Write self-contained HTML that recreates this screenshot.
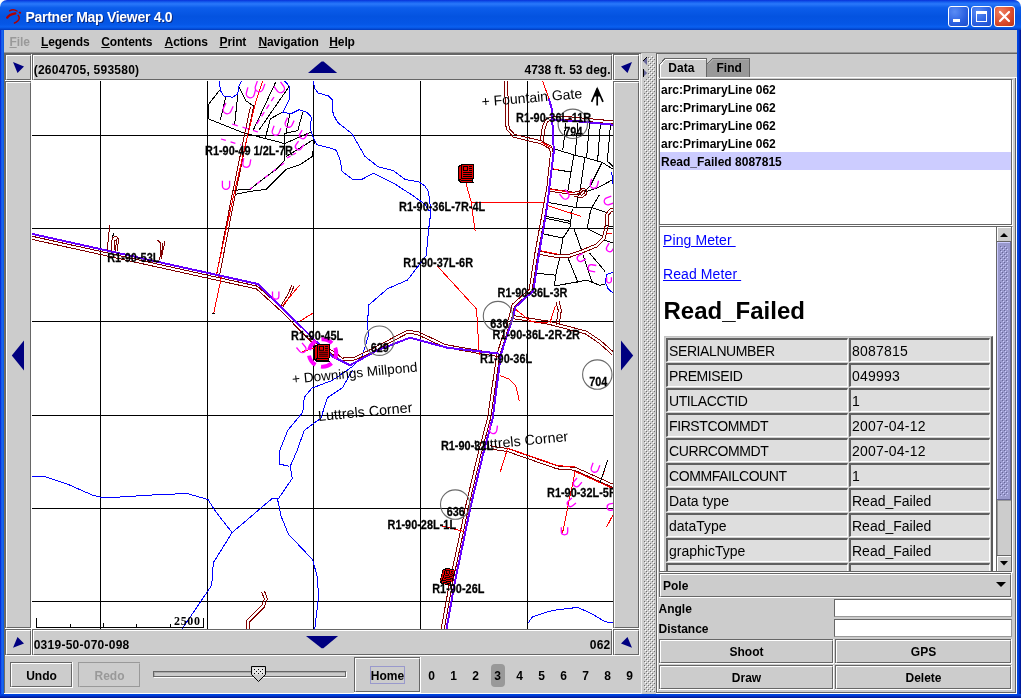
<!DOCTYPE html>
<html><head><meta charset="utf-8"><title>Partner Map Viewer 4.0</title>
<style>
*{box-sizing:border-box;margin:0;padding:0}
html,body{width:1021px;height:698px;overflow:hidden;background:#fff}
#bg{left:4px;top:30px;width:1013px;height:664px;background:#ccc}
body{will-change:transform;position:relative;font-family:"Liberation Sans",sans-serif;font-size:12px;font-weight:bold;color:#000}
.abs{position:absolute}
#title{left:0;top:0;width:1021px;height:30px;background:linear-gradient(#0831d9 0,#1660f0 7%,#2a78fa 13%,#0c5deb 26%,#0453e0 55%,#0556e6 80%,#0a60f0 90%,#0348d0 97%,#0238b8 100%);border-radius:7px 7px 0 0}
#title .t{left:25.5px;top:9px;color:#fff;font-size:14px;line-height:16px;letter-spacing:-.28px;text-shadow:1px 1px 0 #0a2a80;white-space:nowrap}
#bl{left:0;top:30px;width:4px;height:664px;background:linear-gradient(90deg,#0019cf,#1a66f0 45%,#1a66f0 60%,#0855dd)}
#br{left:1017px;top:30px;width:4px;height:668px;background:linear-gradient(90deg,#0046e6,#0040d8 35%,#0024b0 70%,#00138c)}
#bb{left:0;top:694px;width:1021px;height:4px;background:linear-gradient(#0046e6,#0040d8 35%,#0024b0 70%,#00138c)}
.wb{top:6px;width:21px;height:21px;border:1px solid #fff;border-radius:3px;background:radial-gradient(circle at 30% 25%,#5a8cf5,#2a5fe0 60%,#1d4cc8)}
.wb.c{background:radial-gradient(circle at 30% 25%,#f08060,#d9492a 60%,#b83414)}
#menu{left:4px;top:30px;width:1013px;height:22px;background:#ccc}
#menuline{left:4px;top:52px;width:1013px;height:1px;background:#999}
.mi{top:35px;white-space:nowrap;letter-spacing:-.12px}
.mi u{text-decoration:underline}
.btn{background:#ccc;border:1px solid #666;box-shadow:inset 1px 1px 0 #fff, 1px 1px 0 #fff}
.lbl{white-space:nowrap}
#map{left:32px;top:81px;width:581px;height:548px;background:#fff;overflow:hidden}

.b{position:absolute;background:#ccc;border:1px solid #666;border-right:none;border-bottom:none}
.b:before{content:"";position:absolute;left:0;top:0;right:0;bottom:0;border:1px solid #fff;border-right:1px solid #666;border-bottom:1px solid #666}
.b:after{content:"";position:absolute;left:-1px;top:-1px;right:-1px;bottom:-1px;border-right:1px solid #fff;border-bottom:1px solid #fff}
.bt{position:absolute;left:0;right:0;text-align:center;white-space:nowrap;z-index:2}
.dis{border-color:#999}.dis:before{border-color:#ccc #999 #999 #ccc}.dis:after{border-color:#ccc}
.tx{position:absolute;white-space:nowrap}.dg{letter-spacing:.25px}

.n{font-weight:normal}
#htm{font-family:"Liberation Sans",sans-serif;font-weight:normal;font-size:13px}
#htm a{color:#0000ff;text-decoration:underline;font-size:14px;letter-spacing:.1px}
table.t{position:absolute;left:4px;top:109px;border-collapse:separate;border-spacing:1px;background:#d0d0d0;border:1px solid #c2c2c2;border-right:2px solid #5a5a5a;border-bottom:2px solid #5a5a5a;table-layout:fixed;width:329px}
table.t td{height:24px;padding:0 0 0 1px;background:#dedede;border:1px solid #fff;border-top:2px solid #606060;border-left:2px solid #606060;font-size:14px;white-space:nowrap;vertical-align:middle;line-height:16px;overflow:hidden}
td.u{letter-spacing:-.4px}td.d{letter-spacing:.2px}
</style></head><body>
<div id="bg" class="abs"></div>
<div id="title" class="abs"><div class="abs t">Partner Map Viewer 4.0</div>
<svg class="abs" style="left:0;top:0" width="30" height="30"><g fill="none" stroke="#b00000" stroke-linecap="round"><path d="M9.6,10.8 Q13.3,8.4 17,11" stroke-width="1.5"/><path d="M7.2,17.6 Q9,14.6 15.3,13.4" stroke-width="2.3"/><path d="M18.2,15.4 Q20.4,18 17.9,20.8 Q16.4,22.3 14.5,23" stroke-width="1.5"/></g><ellipse cx="19.9" cy="12.6" rx="1.4" ry="1" fill="#b00000" transform="rotate(30 19.9 12.6)"/></svg>
<div class="abs wb" style="left:948px"><div class="abs" style="left:4px;top:12px;width:7px;height:3px;background:#fff"></div></div>
<div class="abs wb" style="left:971px"><div class="abs" style="left:4px;top:4px;width:11px;height:11px;border:1px solid #fff;border-top-width:3px"></div></div>
<div class="abs wb c" style="left:994px"><svg class="abs" style="left:0;top:0" width="19" height="19"><path d="M5 5L14 14M14 5L5 14" stroke="#fff" stroke-width="2.2" stroke-linecap="round"/></svg></div>
</div>
<div id="bl" class="abs"></div><div id="br" class="abs"></div><div id="bb" class="abs"></div>
<div id="menu" class="abs"></div><div id="menuline" class="abs"></div>
<div class="abs" style="left:4px;top:53px;width:637px;height:1px;background:#666"></div><div class="abs" style="left:656px;top:53px;width:361px;height:1px;background:#666"></div>
<div class="abs" style="left:4px;top:53px;width:1px;height:640px;background:#6e6c64"></div><div class="abs" style="left:4px;top:693px;width:1013px;height:1px;background:#fff"></div>
<div class="abs mi" style="left:9.5px;color:#999"><u>F</u>ile</div>
<div class="abs mi" style="left:41px"><u>L</u>egends</div>
<div class="abs mi" style="left:101.3px"><u>C</u>ontents</div>
<div class="abs mi" style="left:164.6px"><u>A</u>ctions</div>
<div class="abs mi" style="left:219.5px"><u>P</u>rint</div>
<div class="abs mi" style="left:258.5px"><u>N</u>avigation</div>
<div class="abs mi" style="left:329.3px"><u>H</u>elp</div>
<!-- MAP PANEL -->
<div id="map" class="abs"><svg class="abs" style="left:0;top:0" width="581" height="548" viewBox="32 81 581 548" shape-rendering="crispEdges">
<line x1="100.6" y1="81" x2="100.6" y2="630" stroke="#000" stroke-width="1"/>
<line x1="207.7" y1="81" x2="207.7" y2="630" stroke="#000" stroke-width="1"/>
<line x1="313.6" y1="81" x2="313.6" y2="630" stroke="#000" stroke-width="1"/>
<line x1="420.8" y1="81" x2="420.8" y2="630" stroke="#000" stroke-width="1"/>
<line x1="527.8" y1="81" x2="527.8" y2="630" stroke="#000" stroke-width="1"/>
<line x1="32" y1="135.3" x2="613" y2="135.3" stroke="#000" stroke-width="1"/>
<line x1="32" y1="228.4" x2="613" y2="228.4" stroke="#000" stroke-width="1"/>
<line x1="32" y1="321.5" x2="613" y2="321.5" stroke="#000" stroke-width="1"/>
<line x1="32" y1="415.4" x2="613" y2="415.4" stroke="#000" stroke-width="1"/>
<line x1="32" y1="508.5" x2="613" y2="508.5" stroke="#000" stroke-width="1"/>
<line x1="32" y1="601.8" x2="613" y2="601.8" stroke="#000" stroke-width="1"/>
<polyline points="219.6,90.1 208.5,104.5 208.1,118.8" fill="none" stroke="#000" stroke-width="1" />
<polyline points="208.1,118.8 244.3,133.2 252.2,135.1 284.7,143.6" fill="none" stroke="#000" stroke-width="1" />
<polyline points="226.1,96.0 220.2,120.1" fill="none" stroke="#000" stroke-width="1" />
<polyline points="237.8,94.0 234.6,125.3" fill="none" stroke="#000" stroke-width="1" />
<polyline points="239.1,86.9 245.6,100.6 254.1,106.4" fill="none" stroke="#000" stroke-width="1" />
<polyline points="275.6,82.3 256.1,124.0 252.8,131.2" fill="none" stroke="#000" stroke-width="1" />
<polyline points="289.3,86.2 258.7,130.5" fill="none" stroke="#000" stroke-width="1" />
<polyline points="283.4,111.6 270.4,118.8 265.2,138.4" fill="none" stroke="#000" stroke-width="1" />
<polyline points="290.0,112.9 286.0,133.2 297.8,130.5 303.0,111.6" fill="none" stroke="#000" stroke-width="1" />
<polyline points="284.7,133.2 284.7,160.5" fill="none" stroke="#000" stroke-width="1" />
<polyline points="311.5,131.8 284.7,143.6" fill="none" stroke="#000" stroke-width="1" />
<polyline points="313.4,139.7 286.0,156.6" fill="none" stroke="#000" stroke-width="1" />
<polyline points="314.7,139.7 312.1,156.6 300.4,164.4 286.3,169.3 276.3,179.3 266.3,189.3 251.2,191.3 235.2,194.3" fill="none" stroke="#000" stroke-width="1" />
<polyline points="284.7,160.5 276.3,169.3 256.2,184.3 250.2,189.3 232.2,190.3" fill="none" stroke="#000" stroke-width="1" />
<polyline points="554.4,148.9 575.0,155.3 586.6,157.9 602.1,162.4 613.7,169.5" fill="none" stroke="#000" stroke-width="1" />
<polyline points="565.5,123.0 564.7,135.3 562.7,150.2" fill="none" stroke="#000" stroke-width="1" />
<polyline points="577.5,123.0 576.9,135.3 575.0,155.3" fill="none" stroke="#000" stroke-width="1" />
<polyline points="589.5,123.5 588.5,135.3 586.6,157.9" fill="none" stroke="#000" stroke-width="1" />
<polyline points="600.5,124.0 599.5,135.3 597.6,161.1" fill="none" stroke="#000" stroke-width="1" />
<polyline points="610.5,125.0 607.3,161.1 613.0,166.3" fill="none" stroke="#000" stroke-width="1" />
<polyline points="573.7,155.3 567.9,190.8" fill="none" stroke="#000" stroke-width="1" />
<polyline points="584.7,157.9 580.2,189.5 577.6,197.3 576.3,207.6" fill="none" stroke="#000" stroke-width="1" />
<polyline points="551.8,168.9 571.1,172.1" fill="none" stroke="#000" stroke-width="1" />
<polyline points="602.1,162.4 590.5,185.6 584.0,192.1" fill="none" stroke="#000" stroke-width="1" />
<polyline points="584.7,192.1 596.9,188.2 613.7,179.2" fill="none" stroke="#000" stroke-width="1" />
<polyline points="599.5,194.7 591.8,207.6 589.2,215.0" fill="none" stroke="#000" stroke-width="1" />
<polyline points="547.9,202.4 576.3,207.6 591.8,207.6 607.3,212.7" fill="none" stroke="#000" stroke-width="1" />
<polyline points="543.6,215.8 570.8,221.5" fill="none" stroke="#000" stroke-width="1" />
<polyline points="543.6,217.8 570.8,223.6" fill="none" stroke="#000" stroke-width="1" />
<polyline points="572.3,208.6 570.1,227.2" fill="none" stroke="#000" stroke-width="1" />
<polyline points="590.9,210.0 587.3,227.9" fill="none" stroke="#000" stroke-width="1" />
<polyline points="570.1,227.2 563.0,238.0 560.1,254.4" fill="none" stroke="#000" stroke-width="1" />
<polyline points="573.7,227.9 581.6,250.1" fill="none" stroke="#000" stroke-width="1" />
<polyline points="587.3,228.7 603.1,236.5" fill="none" stroke="#000" stroke-width="1" />
<polyline points="542.2,233.7 563.0,238.0" fill="none" stroke="#000" stroke-width="1" />
<polyline points="560.1,256.6 555.8,274.5 554.4,286.0" fill="none" stroke="#000" stroke-width="1" />
<polyline points="535.7,273.1 555.8,275.2" fill="none" stroke="#000" stroke-width="1" />
<polyline points="568.0,258.0 578.0,282.4" fill="none" stroke="#000" stroke-width="1" />
<polyline points="583.0,255.2 592.3,282.4" fill="none" stroke="#000" stroke-width="1" />
<polyline points="589.5,253.0 605.2,271.6" fill="none" stroke="#000" stroke-width="1" />
<polyline points="554.4,286.0 586.6,280.2 599.5,285.2 605.2,284.5" fill="none" stroke="#000" stroke-width="1" />
<polyline points="605.0,225.0 613.0,227.0" fill="none" stroke="#000" stroke-width="1" />
<polyline points="604.0,240.0 613.0,243.0" fill="none" stroke="#000" stroke-width="1" />
<polyline points="219.6,81.0 220.2,90.1 223.5,96.0 232.6,97.3 237.8,94.0 238.5,86.9 241.7,81.0" fill="none" stroke="#0000ff" stroke-width="1" />
<polyline points="284.7,81.0 289.3,86.2 290.0,98.0 285.4,107.1 282.8,112.3 291.3,113.6 299.1,109.7 306.9,112.3 311.3,117.1 310.5,129.1 313.5,138.2 317.3,144.9 330.1,147.9 336.1,150.2 339.9,159.2 342.1,171.3 352.7,179.5 361.7,179.5 373.7,173.1 384.2,178.8 394.5,183.8 412.0,195.0 424.6,203.9 429.6,211.4" fill="none" stroke="#0000ff" stroke-width="1" />
<polyline points="313.5,81.0 314.3,87.8 318.1,93.0 328.6,96.0 332.3,99.8 333.1,114.1 337.6,122.4 351.9,133.7 357.2,142.7 364.7,156.2 378.2,166.8 393.3,170.5 405.3,179.5 418.9,181.8 424.9,186.0 428.4,191.3 430.9,211.4 428.4,231.5 426.3,255.4 420.0,263.8 407.5,280.0 387.5,288.8 368.7,305.0 367.4,325.0 368.7,335.0 362.4,355.3 352.4,366.6 332.3,380.4 311.9,388.1 304.3,397.2 302.8,412.2 287.8,430.3 279.4,451.3 279.4,464.0 289.3,466.4" fill="none" stroke="#0000ff" stroke-width="1" />
<polyline points="352.4,370.3 342.3,387.9 327.3,397.9 320.9,418.2 304.3,430.3 296.8,451.3 290.2,466.4 292.3,478.4 278.8,498.0 272.7,498.0 232.1,532.6 213.3,562.8 211.7,585.3 181.7,629.5" fill="none" stroke="#0000ff" stroke-width="1" />
<polyline points="32.0,476.9 44.0,476.3 68.1,484.4 92.2,495.0 104.2,498.0 152.4,495.0 187.0,493.5 208.0,499.5 215.6,511.5 232.1,532.6" fill="none" stroke="#0000ff" stroke-width="1" />
<polyline points="277.3,498.0 281.0,516.1 288.5,534.2 312.6,559.7 317.1,576.3 318.6,595.9 314.7,629.5" fill="none" stroke="#0000ff" stroke-width="1" />
<polyline points="528.2,622.9 532.5,616.7 552.5,610.4 577.6,607.4 590.1,612.9 605.2,621.7 614.0,622.9" fill="none" stroke="#0000ff" stroke-width="1" />
<polyline points="612.7,272.3 606.7,274.5 605.2,281.7 608.1,288.8 613.1,293.1" fill="none" stroke="#0000ff" stroke-width="1" />
<polyline points="611.0,172.0 612.5,176.0 612.0,184.0" fill="none" stroke="#0000ff" stroke-width="1" />
<polyline points="250.4,106.8 244.5,134.8 231.1,199.7 216.8,273.7" fill="none" stroke="#800000" stroke-width="1" />
<polyline points="253.4,107.4 247.5,135.4 234.1,200.3 219.8,274.3" fill="none" stroke="#800000" stroke-width="1" />
<polyline points="31.7,239.3 256.6,289.0 281.0,311.1 316.0,346.6 331.4,353.4" fill="none" stroke="#800000" stroke-width="1" />
<polyline points="32.3,236.3 257.4,286.2 283.0,308.9 318.0,344.4 332.6,350.6" fill="none" stroke="#800000" stroke-width="1" />
<polyline points="331.1,353.2 341.6,360.9 355.4,359.9 373.1,351.6 408.0,333.1 417.1,334.4 444.6,347.4 481.8,354.0 498.8,356.5" fill="none" stroke="#800000" stroke-width="1" />
<polyline points="332.9,350.8 342.4,358.1 354.6,357.1 371.7,349.0 407.0,330.3 418.1,331.6 445.4,344.6 482.2,351.0 499.2,353.5" fill="none" stroke="#800000" stroke-width="1" />
<polyline points="504.5,81.1 506.1,128.8 513.4,137.2 540.5,143.7 549.5,148.6 550.5,152.9 547.0,186.1 543.0,208.5 534.7,254.3 529.1,289.8" fill="none" stroke="#800000" stroke-width="1" />
<polyline points="507.5,80.9 509.1,128.4 514.6,134.4 541.5,140.9 551.5,146.4 553.5,153.1 550.0,186.5 546.0,209.1 537.7,254.9 532.1,290.2" fill="none" stroke="#800000" stroke-width="1" />
<polyline points="529.6,288.9 512.0,304.6 509.0,316.8 496.8,354.4 487.7,417.3 477.7,454.8 465.3,507.6 460.2,532.4 450.0,580.0 441.1,629.2" fill="none" stroke="#800000" stroke-width="1" />
<polyline points="531.6,291.1 514.4,306.4 511.8,317.6 499.8,355.0 490.7,417.9 480.7,455.6 468.3,508.2 463.2,533.0 453.0,580.6 444.1,629.8" fill="none" stroke="#800000" stroke-width="1" />
<polyline points="543.0,141.6 545.3,127.7 547.6,121.8 551.6,119.9 570.5,119.9 612.7,123.9" fill="none" stroke="#800000" stroke-width="1" />
<polyline points="540.0,141.2 542.3,126.9 545.4,119.8 551.4,116.9 570.7,116.9 612.9,120.9" fill="none" stroke="#800000" stroke-width="1" />
<polyline points="548.5,191.0 573.6,194.7 580.5,193.3 582.9,190.4 584.5,190.8 584.3,193.2 581.8,195.1 573.8,194.1" fill="none" stroke="#800000" stroke-width="1" />
<polyline points="548.9,188.6 573.8,192.3 579.5,191.1 582.1,188.2 586.5,189.6 586.3,194.4 582.2,197.5 573.6,196.5" fill="none" stroke="#800000" stroke-width="1" />
<polyline points="537.7,254.0 557.8,257.8 568.3,257.8 582.8,252.7 597.4,246.8 605.1,239.1 608.2,226.0 608.8,214.7 612.0,211.2 613.9,210.7" fill="none" stroke="#800000" stroke-width="1" />
<polyline points="538.3,251.0 558.2,254.8 567.7,254.8 581.8,249.9 595.8,244.2 602.5,237.7 605.2,225.6 606.0,213.9 610.0,208.8 613.1,207.9" fill="none" stroke="#800000" stroke-width="1" />
<polyline points="513.3,318.7 548.5,324.2 585.8,334.1 599.1,343.2 612.0,354.7" fill="none" stroke="#800000" stroke-width="1" />
<polyline points="513.7,315.7 549.1,321.2 586.8,331.3 600.9,340.8 614.0,352.5" fill="none" stroke="#800000" stroke-width="1" />
<polyline points="559.1,325.2 561.3,310.6 559.1,301.4" fill="none" stroke="#800000" stroke-width="1" />
<polyline points="556.1,324.8 558.3,310.6 556.1,302.2" fill="none" stroke="#800000" stroke-width="1" />
<polyline points="489.6,448.9 507.0,451.4 557.1,468.9 574.6,470.2 613.4,487.7" fill="none" stroke="#800000" stroke-width="1" />
<polyline points="490.0,445.9 507.8,448.6 557.9,466.1 575.6,467.4 614.6,484.9" fill="none" stroke="#800000" stroke-width="1" />
<polyline points="249.4,629.5 249.2,622.2 264.1,607.3 267.4,598.9 264.3,590.7" fill="none" stroke="#800000" stroke-width="1" />
<polyline points="246.4,629.5 246.6,620.6 261.7,605.5 264.4,598.9 261.5,591.9" fill="none" stroke="#800000" stroke-width="1" />
<polyline points="109.7,225.0 107.2,250.0" fill="none" stroke="#800000" stroke-width="1" />
<polyline points="112.2,237.6 114.0,233.0" fill="none" stroke="#000" stroke-width="1" />
<polyline points="111.0,252.0 112.2,238.0 116.0,236.0 118.5,239.0 117.2,251.0" fill="none" stroke="#800000" stroke-width="1" />
<polyline points="114.0,250.0 114.5,241.0 116.5,240.0 115.5,251.0" fill="none" stroke="#800000" stroke-width="1" />
<polyline points="157.4,240.1 160.5,243.0 159.9,260.2" fill="none" stroke="#800000" stroke-width="1" />
<polyline points="164.9,241.4 161.2,259.0" fill="none" stroke="#800000" stroke-width="1" />
<polyline points="162.8,243.5 161.0,258.0" fill="none" stroke="#800000" stroke-width="1" />
<polyline points="282.5,307.6 290.1,295.6 294.1,286.0" fill="none" stroke="#800000" stroke-width="1" />
<polyline points="280.5,306.4 287.9,294.4 291.9,285.0" fill="none" stroke="#800000" stroke-width="1" />
<polyline points="262.6,81.0 256.1,100.6 246.9,138.4 232.6,200.0 216.3,275.2 221.3,277.7 213.8,312.8" fill="none" stroke="#ff0000" stroke-width="1" />
<polyline points="466.0,183.3 471.0,201.4 475.3,231.5" fill="none" stroke="#ff0000" stroke-width="1" />
<polyline points="471.8,202.4 543.7,202.4" fill="none" stroke="#ff0000" stroke-width="1" />
<polyline points="542.5,81.0 549.5,99.8" fill="none" stroke="#ff0000" stroke-width="1" />
<polyline points="546.4,205.3 580.8,216.3" fill="none" stroke="#ff0000" stroke-width="1" />
<polyline points="552.0,168.7 559.0,169.8" fill="none" stroke="#ff0000" stroke-width="1" />
<polyline points="539.5,250.4 557.8,254.2" fill="none" stroke="#ff0000" stroke-width="1" />
<polyline points="606.7,233.0 612.4,233.7" fill="none" stroke="#ff0000" stroke-width="1" />
<polyline points="437.6,266.3 476.5,308.9 479.3,354.7" fill="none" stroke="#ff0000" stroke-width="1" />
<polyline points="515.7,309.5 531.2,321.6 548.0,323.0" fill="none" stroke="#ff0000" stroke-width="1" />
<polyline points="550.0,322.7 555.4,305.8" fill="none" stroke="#ff0000" stroke-width="1" />
<polyline points="500.3,375.7 509.0,379.0 515.7,385.6 519.4,401.3" fill="none" stroke="#ff0000" stroke-width="1" />
<polyline points="280.9,307.6 299.7,285.0" fill="none" stroke="#ff0000" stroke-width="1" />
<polyline points="299.7,321.4 312.7,313.2" fill="none" stroke="#ff0000" stroke-width="1" />
<polyline points="301.8,351.8 313.6,348.3" fill="none" stroke="#ff0000" stroke-width="1" />
<polyline points="574.0,471.0 614.0,489.0" fill="none" stroke="#ff0000" stroke-width="1" />
<polyline points="604.5,470.0 600.2,482.8" fill="none" stroke="#ff0000" stroke-width="1" />
<polyline points="507.4,449.0 500.4,471.5" fill="none" stroke="#ff0000" stroke-width="1" />
<polyline points="575.1,471.5 562.5,533.0" fill="none" stroke="#ff0000" stroke-width="1" />
<polyline points="612.7,515.4 606.4,527.4" fill="none" stroke="#ff0000" stroke-width="1" />
<polyline points="439.7,525.4 464.7,531.7" fill="none" stroke="#ff0000" stroke-width="1" />
<polyline points="507.0,448.0 557.5,465.5 575.0,467.0" fill="none" stroke="#ff0000" stroke-width="1" />
<polyline points="549.0,189.0 573.0,192.8" fill="none" stroke="#ff0000" stroke-width="1" />
<polyline points="541.0,142.0 551.0,147.5" fill="none" stroke="#ff0000" stroke-width="1" />
<polyline points="607.7,460.2 600.2,482.8" fill="none" stroke="#000" stroke-width="1" />
<polyline points="212.3,313.0 215.3,313.0" fill="none" stroke="#000" stroke-width="1" />
<polyline points="32.0,233.9 257.7,284.0 282.0,307.8 317.3,342.7 332.3,356.5 349.9,365.3 377.4,350.3 410.0,337.7 447.6,347.8 499.2,353.6" fill="none" stroke="#6600ff" stroke-width="2" />
<polyline points="548.9,98.6 551.7,109.0 552.4,123.0 553.8,151.2 546.8,208.8 538.8,254.6 533.3,290.8 515.6,306.8 512.9,317.2 500.8,354.7 492.8,417.6 482.8,455.2 470.3,507.9 465.2,532.7 455.2,580.3 446.4,629.5" fill="none" stroke="#6600ff" stroke-width="2" />
<polyline points="552.4,119.8 576.3,121.2 612.8,124.7" fill="none" stroke="#6600ff" stroke-width="2" />
</svg>
<svg class="abs" style="left:0;top:0;font-family:'Liberation Sans',sans-serif" width="581" height="548" viewBox="32 81 581 548">
<circle cx="322.5" cy="353" r="13.7" fill="none" stroke="#ff00ff" stroke-width="4" stroke-dasharray="11.5 5.7" stroke-dashoffset="5.75"/>
<path transform="translate(227.5,109) rotate(25)" d="M-4.0,-4.8 V0.8 A4.0,4.0 0 0 0 4.0,0.8 V-4.8" fill="none" stroke="#ff00ff" stroke-width="1.3"/>
<path transform="translate(250.5,93) rotate(15)" d="M-4.0,-4.8 V0.8 A4.0,4.0 0 0 0 4.0,0.8 V-4.8" fill="none" stroke="#ff00ff" stroke-width="1.3"/>
<path transform="translate(259.5,87) rotate(20)" d="M-4.0,-4.8 V0.8 A4.0,4.0 0 0 0 4.0,0.8 V-4.8" fill="none" stroke="#ff00ff" stroke-width="1.3"/>
<path transform="translate(280,88) rotate(-35)" d="M-4.0,-4.8 V0.8 A4.0,4.0 0 0 0 4.0,0.8 V-4.8" fill="none" stroke="#ff00ff" stroke-width="1.3"/>
<path transform="translate(276,131) rotate(20)" d="M-3.6,-4.3 V0.7 A3.6,3.6 0 0 0 3.6,0.7 V-4.3" fill="none" stroke="#ff00ff" stroke-width="1.3"/>
<path transform="translate(289,123) rotate(25)" d="M-3.6,-4.3 V0.7 A3.6,3.6 0 0 0 3.6,0.7 V-4.3" fill="none" stroke="#ff00ff" stroke-width="1.3"/>
<path transform="translate(303,135) rotate(30)" d="M-3.2,-3.8 V0.6 A3.2,3.2 0 0 0 3.2,0.6 V-3.8" fill="none" stroke="#ff00ff" stroke-width="1.3"/>
<path transform="translate(299,146) rotate(35)" d="M-3.2,-3.8 V0.6 A3.2,3.2 0 0 0 3.2,0.6 V-3.8" fill="none" stroke="#ff00ff" stroke-width="1.3"/>
<path transform="translate(246.5,163) rotate(10)" d="M-3.6,-4.3 V0.7 A3.6,3.6 0 0 0 3.6,0.7 V-4.3" fill="none" stroke="#ff00ff" stroke-width="1.3"/>
<path transform="translate(226,185) rotate(0)" d="M-3.6,-4.3 V0.7 A3.6,3.6 0 0 0 3.6,0.7 V-4.3" fill="none" stroke="#ff00ff" stroke-width="1.3"/>
<path transform="translate(565,195) rotate(-40)" d="M-3.6,-4.3 V0.7 A3.6,3.6 0 0 0 3.6,0.7 V-4.3" fill="none" stroke="#ff00ff" stroke-width="1.3"/>
<path transform="translate(594,184) rotate(15)" d="M-3.6,-4.3 V0.7 A3.6,3.6 0 0 0 3.6,0.7 V-4.3" fill="none" stroke="#ff00ff" stroke-width="1.3"/>
<path transform="translate(275.7,295.3) rotate(0)" d="M-3.2,-3.8 V0.6 A3.2,3.2 0 0 0 3.2,0.6 V-3.8" fill="none" stroke="#ff00ff" stroke-width="1.3"/>
<path transform="translate(302,348.5) rotate(-40)" d="M-3.6,-4.3 V0.7 A3.6,3.6 0 0 0 3.6,0.7 V-4.3" fill="none" stroke="#ff00ff" stroke-width="1.3"/>
<path transform="translate(493.3,429.3) rotate(8)" d="M-3.6,-4.3 V0.7 A3.6,3.6 0 0 0 3.6,0.7 V-4.3" fill="none" stroke="#ff00ff" stroke-width="1.3"/>
<path transform="translate(595,468) rotate(20)" d="M-3.6,-4.3 V0.7 A3.6,3.6 0 0 0 3.6,0.7 V-4.3" fill="none" stroke="#ff00ff" stroke-width="1.3"/>
<path transform="translate(577,483) rotate(40)" d="M-3.2,-3.8 V0.6 A3.2,3.2 0 0 0 3.2,0.6 V-3.8" fill="none" stroke="#ff00ff" stroke-width="1.3"/>
<path transform="translate(571,503) rotate(50)" d="M-3.2,-3.8 V0.6 A3.2,3.2 0 0 0 3.2,0.6 V-3.8" fill="none" stroke="#ff00ff" stroke-width="1.3"/>
<path transform="translate(564.5,531) rotate(0)" d="M-3.2,-3.8 V0.6 A3.2,3.2 0 0 0 3.2,0.6 V-3.8" fill="none" stroke="#ff00ff" stroke-width="1.3"/>
<path transform="translate(611,507) rotate(80)" d="M-3.2,-3.8 V0.6 A3.2,3.2 0 0 0 3.2,0.6 V-3.8" fill="none" stroke="#ff00ff" stroke-width="1.3"/>
<path transform="translate(608.5,201) rotate(70)" d="M-3.6,-4.3 V0.7 A3.6,3.6 0 0 0 3.6,0.7 V-4.3" fill="none" stroke="#ff00ff" stroke-width="1.3"/>
<path transform="translate(581,258) rotate(60)" d="M-3.2,-3.8 V0.6 A3.2,3.2 0 0 0 3.2,0.6 V-3.8" fill="none" stroke="#ff00ff" stroke-width="1.3"/>
<path transform="translate(592,268) rotate(100)" d="M-3.2,-3.8 V0.6 A3.2,3.2 0 0 0 3.2,0.6 V-3.8" fill="none" stroke="#ff00ff" stroke-width="1.3"/>
<path transform="translate(610,248) rotate(30)" d="M-3.2,-3.8 V0.6 A3.2,3.2 0 0 0 3.2,0.6 V-3.8" fill="none" stroke="#ff00ff" stroke-width="1.3"/>
<path transform="translate(609,280) rotate(0)" d="M-2.4,-2.8 V0.4 A2.4,2.4 0 0 0 2.4,0.4 V-2.8" fill="none" stroke="#ff00ff" stroke-width="1.3"/>
<line x1="274" y1="97" x2="256" y2="125" stroke="#ff00ff" stroke-width="1.3" stroke-dasharray="5 4"/>
<line x1="284" y1="163" x2="250" y2="189" stroke="#ff00ff" stroke-width="1.3" stroke-dasharray="4 6"/>
<line x1="221" y1="139" x2="241" y2="145" stroke="#ff00ff" stroke-width="1.3" stroke-dasharray="5 5"/>
<line x1="232" y1="124" x2="258" y2="132" stroke="#ff00ff" stroke-width="1.3" stroke-dasharray="6 5"/>
<line x1="287" y1="158" x2="296" y2="153" stroke="#ff00ff" stroke-width="1.3" stroke-dasharray="4 3"/>
<circle cx="572.8" cy="123.8" r="14.7" fill="none" stroke="#6a6a6a" stroke-width="1.1"/>
<circle cx="379.4" cy="340.7" r="14.7" fill="none" stroke="#6a6a6a" stroke-width="1.1"/>
<circle cx="498" cy="316.1" r="14.7" fill="none" stroke="#6a6a6a" stroke-width="1.1"/>
<circle cx="597.3" cy="374.6" r="14.7" fill="none" stroke="#6a6a6a" stroke-width="1.1"/>
<circle cx="455.2" cy="504.6" r="14.7" fill="none" stroke="#6a6a6a" stroke-width="1.1"/>
<text transform="translate(482,106.5) rotate(-4.8)" font-size="14" font-weight="normal" fill="#000">+ Fountain Gate</text>
<text transform="translate(292.5,383.7) rotate(-5.6)" font-size="13.6" font-weight="normal" fill="#000">+ Downings Millpond</text>
<text transform="translate(318.5,421) rotate(-5.4)" font-size="14.3" font-weight="normal" fill="#000">Luttrels Corner</text>
<text transform="translate(474.5,450.5) rotate(-5.8)" font-size="14.3" font-weight="normal" fill="#000">Luttrels Corner</text>
<text transform="translate(205,154.6) scale(.84,1)" font-size="13" font-weight="bold" fill="#000" stroke="#000" stroke-width=".25" text-anchor="start">R1-90-49 1/2L-7R</text>
<text transform="translate(107.2,261.5) scale(.84,1)" font-size="13" font-weight="bold" fill="#000" stroke="#000" stroke-width=".25" text-anchor="start">R1-90-53L</text>
<text transform="translate(399,210.6) scale(.84,1)" font-size="13" font-weight="bold" fill="#000" stroke="#000" stroke-width=".25" text-anchor="start">R1-90-36L-7R-4L</text>
<text transform="translate(516,121.6) scale(.84,1)" font-size="13" font-weight="bold" fill="#000" stroke="#000" stroke-width=".25" text-anchor="start">R1-90-36L-11R</text>
<text transform="translate(564.3,135.6) scale(.84,1)" font-size="13" font-weight="bold" fill="#000" stroke="#000" stroke-width=".25" text-anchor="start">794</text>
<text transform="translate(403.3,267.0) scale(.84,1)" font-size="13" font-weight="bold" fill="#000" stroke="#000" stroke-width=".25" text-anchor="start">R1-90-37L-6R</text>
<text transform="translate(497.6,296.9) scale(.84,1)" font-size="13" font-weight="bold" fill="#000" stroke="#000" stroke-width=".25" text-anchor="start">R1-90-36L-3R</text>
<text transform="translate(492.5,338.8) scale(.84,1)" font-size="13" font-weight="bold" fill="#000" stroke="#000" stroke-width=".25" text-anchor="start">R1-90-36L-2R-2R</text>
<text transform="translate(480,363.1) scale(.84,1)" font-size="13" font-weight="bold" fill="#000" stroke="#000" stroke-width=".25" text-anchor="start">R1-90-36L</text>
<text transform="translate(291,340.3) scale(.84,1)" font-size="13" font-weight="bold" fill="#000" stroke="#000" stroke-width=".25" text-anchor="start">R1-90-45L</text>
<text transform="translate(370.7,352.1) scale(.84,1)" font-size="13" font-weight="bold" fill="#000" stroke="#000" stroke-width=".25" text-anchor="start">629</text>
<text transform="translate(490.3,327.8) scale(.84,1)" font-size="13" font-weight="bold" fill="#000" stroke="#000" stroke-width=".25" text-anchor="start">636</text>
<text transform="translate(589.2,386.2) scale(.84,1)" font-size="13" font-weight="bold" fill="#000" stroke="#000" stroke-width=".25" text-anchor="start">704</text>
<text transform="translate(440.9,450.3) scale(.84,1)" font-size="13" font-weight="bold" fill="#000" stroke="#000" stroke-width=".25" text-anchor="start">R1-90-32L</text>
<text transform="translate(387.5,528.6) scale(.84,1)" font-size="13" font-weight="bold" fill="#000" stroke="#000" stroke-width=".25" text-anchor="start">R1-90-28L-1L</text>
<text transform="translate(547,497.2) scale(.84,1)" font-size="13" font-weight="bold" fill="#000" stroke="#000" stroke-width=".25" text-anchor="start">R1-90-32L-5R</text>
<text transform="translate(446.7,516.0) scale(.84,1)" font-size="13" font-weight="bold" fill="#000" stroke="#000" stroke-width=".25" text-anchor="start">636</text>
<text transform="translate(432.2,593.4) scale(.84,1)" font-size="13" font-weight="bold" fill="#000" stroke="#000" stroke-width=".25" text-anchor="start">R1-90-26L</text>
<g transform="translate(458,164)" shape-rendering="crispEdges"><path d="M3,0 H16 V14.7 H15 V17.5 L16,18 V18.8 H2.5 L0,16.5 V2.3 L2,1.2 Z" fill="#000"/><rect x="4" y="1" width="11" height="13" fill="#e60000"/><path d="M1,3 L2.7,2 V14.5 L1,15.8 Z" fill="#e60000"/><path d="M3.5,15.3 H14 V16.1 H3.5 L2.3,16.6 Z M3.2,17.1 H14 V17.9 H3.2 Z" fill="#e60000"/><rect x="5.5" y="2.5" width="4" height="4" fill="#e60000" stroke="#000" stroke-width="1"/><path d="M11,2.5H14M11,4.5H14M11,6.5H14M5,8.5H14M5,10.5H14M5,12.5H14" stroke="#000" stroke-width="1" fill="none"/></g>
<g transform="translate(314,344) scale(1,0.97)" shape-rendering="crispEdges"><path d="M3,0 H16 V14.7 H15 V17.5 L16,18 V18.8 H2.5 L0,16.5 V2.3 L2,1.2 Z" fill="#000"/><rect x="4" y="1" width="11" height="13" fill="#e60000"/><path d="M1,3 L2.7,2 V14.5 L1,15.8 Z" fill="#e60000"/><path d="M3.5,15.3 H14 V16.1 H3.5 L2.3,16.6 Z M3.2,17.1 H14 V17.9 H3.2 Z" fill="#e60000"/><rect x="5.5" y="2.5" width="4" height="4" fill="#e60000" stroke="#000" stroke-width="1"/><path d="M11,2.5H14M11,4.5H14M11,6.5H14M5,8.5H14M5,10.5H14M5,12.5H14" stroke="#000" stroke-width="1" fill="none"/></g>
<g transform="matrix(0.7625,0.1625,-0.237,0.853,443.4,567.2)" shape-rendering="crispEdges"><path d="M3,0 H16 V14.7 H15 V17.5 L16,18 V18.8 H2.5 L0,16.5 V2.3 L2,1.2 Z" fill="#000"/><rect x="4" y="1" width="11" height="13" fill="#e60000"/><path d="M1,3 L2.7,2 V14.5 L1,15.8 Z" fill="#e60000"/><path d="M3.5,15.3 H14 V16.1 H3.5 L2.3,16.6 Z M3.2,17.1 H14 V17.9 H3.2 Z" fill="#e60000"/><rect x="5.5" y="2.5" width="4" height="4" fill="#e60000" stroke="#000" stroke-width="1"/><path d="M11,2.5H14M11,4.5H14M11,6.5H14M5,8.5H14M5,10.5H14M5,12.5H14" stroke="#000" stroke-width="1" fill="none"/></g>
<path d="M597.2,88.5 L591.6,101.8 M597.2,88.5 L603,101.8 M597.2,89 V105.4" stroke="#000" stroke-width="1.7" fill="none"/><path d="M597.2,86.6 L594.2,96.5 H600.2 Z" fill="#000"/>
<path d="M36.5,618 V627.5 H203.5 V618" fill="none" stroke="#000" stroke-width="1" shape-rendering="crispEdges"/>
<line x1="70" y1="623.5" x2="70" y2="627.5" stroke="#000" shape-rendering="crispEdges"/>
<line x1="103.4" y1="622.5" x2="103.4" y2="627.5" stroke="#000" shape-rendering="crispEdges"/>
<line x1="136.8" y1="623.5" x2="136.8" y2="627.5" stroke="#000" shape-rendering="crispEdges"/>
<line x1="170.2" y1="623.5" x2="170.2" y2="627.5" stroke="#000" shape-rendering="crispEdges"/>
<text x="200.5" y="625" font-family="'Liberation Serif',serif" font-weight="bold" font-size="12" text-anchor="end" letter-spacing="0.6">2500</text>
</svg>
</div>
<div class="b " style="left:5px;top:54px;width:26px;height:26px"><svg class="abs" style="left:-1px;top:-1px;z-index:2" width="27" height="27"><polygon points="8,8 19,12.5 12.5,19" fill="#000080"/></svg></div>
<div class="b " style="left:32px;top:54px;width:580px;height:26px"></div>
<div class="b " style="left:613px;top:54px;width:26px;height:26px"><svg class="abs" style="left:-1px;top:-1px;z-index:2" width="27" height="27"><polygon points="19,8 8,12.5 14.5,19" fill="#000080"/></svg></div>
<div class="b " style="left:5px;top:81px;width:26px;height:547px"><svg class="abs" style="left:-1px;top:-1px;z-index:2" width="27" height="548"><polygon points="19,259.5 19,289.5 6.8,274.5" fill="#000080"/></svg></div>
<div class="b " style="left:613px;top:81px;width:26px;height:547px"><svg class="abs" style="left:-1px;top:-1px;z-index:2" width="27" height="548"><polygon points="8,259.5 8,289.5 20.2,274.5" fill="#000080"/></svg></div>
<div class="b " style="left:5px;top:629px;width:26px;height:26px"><svg class="abs" style="left:-1px;top:-1px;z-index:2" width="27" height="27"><polygon points="8,18.8 19,14.5 12.5,8" fill="#000080"/></svg></div>
<div class="b " style="left:32px;top:629px;width:580px;height:26px"></div>
<div class="b " style="left:613px;top:629px;width:26px;height:26px"><svg class="abs" style="left:-1px;top:-1px;z-index:2" width="27" height="27"><polygon points="19,18.8 8,14.5 14.5,8" fill="#000080"/></svg></div>
<div class="tx dg" style="left:33.7px;top:63px">(2604705, 593580)</div>
<div class="tx" style="right:410.5px;top:63px">4738 ft. 53 deg.</div>
<div class="tx dg" style="left:33.7px;top:638px">0319-50-070-098</div>
<div class="tx dg" style="right:410.5px;top:638px">062</div>
<svg class="abs" style="left:305px;top:60px" width="34" height="14"><polygon points="3,13 32.2,13 18.6,1.6 16.6,1.6" fill="#000080"/></svg>
<svg class="abs" style="left:305px;top:635px" width="34" height="14"><polygon points="1,1 33.1,1 18.4,13.2 16.6,13.2" fill="#000080"/></svg>
<div class="b " style="left:10px;top:662px;width:62px;height:25px"><div class="bt" style="top:6px">Undo</div></div>
<div class="b dis" style="left:78px;top:662px;width:62px;height:25px"><div class="bt" style="top:6px;color:#999">Redo</div></div>
<div class="b " style="left:354px;top:657px;width:66px;height:35px"><div class="bt" style="top:11px">Home</div><div class="abs" style="left:15px;top:8px;width:35px;height:18px;border:1px solid #9999cc;z-index:2"></div></div>
<div class="abs" style="left:153px;top:671px;width:193px;height:6px;border:1px solid #666;background:#ccc;box-shadow:1px 1px 0 #fff"><div class="abs" style="left:0;top:0;right:0;bottom:0;border-top:1px solid #aaa;border-left:1px solid #aaa"></div></div>
<svg class="abs" style="left:250px;top:665px" width="17" height="18"><polygon points="1.5,1.5 15.5,1.5 15.5,9.5 8.5,16.5 1.5,9.5" fill="#ccc" stroke="#000" stroke-width="1"/><rect x="2.5" y="2.5" width="12" height="7" fill="#e6e6e6"/><g fill="#000" shape-rendering="crispEdges"><rect x="4" y="4" width="1" height="1"/><rect x="8" y="4" width="1" height="1"/><rect x="12" y="4" width="1" height="1"/><rect x="6" y="6" width="1" height="1"/><rect x="10" y="6" width="1" height="1"/><rect x="4" y="8" width="1" height="1"/><rect x="8" y="8" width="1" height="1"/><rect x="12" y="8" width="1" height="1"/></g></svg>
<div class="abs" style="left:491px;top:664px;width:14px;height:23px;background:#999;border-radius:4px"></div>
<div class="tx" style="left:421.5px;top:669px;width:20px;text-align:center">0</div>
<div class="tx" style="left:443.5px;top:669px;width:20px;text-align:center">1</div>
<div class="tx" style="left:465.5px;top:669px;width:20px;text-align:center">2</div>
<div class="tx" style="left:487.5px;top:669px;width:20px;text-align:center">3</div>
<div class="tx" style="left:509.5px;top:669px;width:20px;text-align:center">4</div>
<div class="tx" style="left:531.5px;top:669px;width:20px;text-align:center">5</div>
<div class="tx" style="left:553.5px;top:669px;width:20px;text-align:center">6</div>
<div class="tx" style="left:575.5px;top:669px;width:20px;text-align:center">7</div>
<div class="tx" style="left:597.5px;top:669px;width:20px;text-align:center">8</div>
<div class="tx" style="left:619.5px;top:669px;width:20px;text-align:center">9</div>
<!-- DIVIDER -->
<div class="abs" style="left:641px;top:54px;width:15px;height:640px;background:#ccc">
<svg class="abs" style="left:0;top:0" width="15" height="640"><defs><pattern id="bump" width="4" height="4" patternUnits="userSpaceOnUse"><rect x="0" y="0" width="1" height="1" fill="#fff"/><rect x="1" y="1" width="1" height="1" fill="#707070"/><rect x="2" y="2" width="1" height="1" fill="#fff"/><rect x="3" y="3" width="1" height="1" fill="#707070"/></pattern></defs>
<rect x="3" y="2" width="11" height="636" fill="url(#bump)"/><rect x="0" y="0" width="7" height="25" fill="#ccc"/><rect x="0" y="0" width="1" height="640" fill="#eee"/>
<polygon points="6,3 6,11 2,7" fill="#666699"/><polygon points="2,15 2,23 6.2,19" fill="#666699"/><path d="M6,3 L2,7 M2.5,15 V23" stroke="#000" stroke-width="1" fill="none"/></svg></div>
<!-- TABS -->
<svg class="abs" style="left:656px;top:56px" width="362" height="24" shape-rendering="crispEdges">
<polygon points="51,22 51,8 56.5,2.5 94,2.5 94,22" fill="#999"/>
<polyline points="51.5,8 56.5,2.5 93.5,2.5 93.5,21" fill="none" stroke="#666"/>
<polyline points="52.5,8 57,3.5 93,3.5" fill="none" stroke="#aaa"/>
<polyline points="3.5,22 3.5,8.5 9,2.5 50.5,2.5 50.5,21" fill="none" stroke="#666"/>
<polyline points="4.5,22 4.5,9 9.5,3.5 50,3.5" fill="none" stroke="#fff"/>
<rect x="2" y="21" width="359" height="1" fill="#fff"/><rect x="3" y="21" width="1" height="1" fill="#666"/>
</svg>
<div class="tx" style="left:668.3px;top:61px;letter-spacing:0">Data</div><div class="tx" style="left:716.5px;top:61px;letter-spacing:0">Find</div>
<div class="abs" style="left:656px;top:54px;width:1px;height:639px;background:#666"></div><div class="abs" style="left:657px;top:54px;width:1px;height:638px;background:#fff"></div>
<div class="abs" style="left:1015px;top:78px;width:1px;height:615px;background:#666"></div><div class="abs" style="left:1016px;top:77px;width:1px;height:616px;background:#fff"></div>
<div class="abs" style="left:656px;top:692px;width:360px;height:1px;background:#666"></div>
<div class="abs" style="left:659px;top:79px;width:354px;height:147px;background:#fff;border:1px solid #666;border-right-color:#fff;border-bottom-color:#fff"><div class="abs" style="left:0;top:0;right:0;bottom:0;border-right:1px solid #666;border-bottom:1px solid #666"></div>
<div class="abs" style="left:0;top:0px;width:351px;height:18px;padding:3px 0 0 1px;white-space:nowrap">arc:PrimaryLine 062</div>
<div class="abs" style="left:0;top:18px;width:351px;height:18px;padding:3px 0 0 1px;white-space:nowrap">arc:PrimaryLine 062</div>
<div class="abs" style="left:0;top:36px;width:351px;height:18px;padding:3px 0 0 1px;white-space:nowrap">arc:PrimaryLine 062</div>
<div class="abs" style="left:0;top:54px;width:351px;height:18px;padding:3px 0 0 1px;white-space:nowrap">arc:PrimaryLine 062</div>
<div class="abs" style="left:0;top:72px;width:351px;height:18px;padding:3px 0 0 1px;white-space:nowrap;background:#ccccff">Read_Failed 8087815</div>
</div>
<div id="htm" class="abs" style="left:659px;top:226px;width:354px;height:347px;background:#fff;border:1px solid #666;border-right-color:#fff;border-bottom-color:#fff;overflow:hidden"><div class="abs" style="left:0;top:0;right:0;bottom:0;border-right:1px solid #666;border-bottom:1px solid #666;z-index:5;pointer-events:none"></div>
<a class="abs" style="left:3px;top:5px;white-space:pre">Ping Meter </a><a class="abs" style="left:3px;top:39px;white-space:pre">Read Meter </a>
<div class="abs" style="left:3.5px;top:69.5px;font-size:24px;font-weight:bold;white-space:nowrap">Read_Failed</div>
<table class="t"><colgroup><col style="width:182px"><col style="width:141px"></colgroup>
<tr><td class="u">SERIALNUMBER</td><td class="d">8087815</td></tr>
<tr><td class="u">PREMISEID</td><td class="d">049993</td></tr>
<tr><td class="u">UTILACCTID</td><td class="d">1</td></tr>
<tr><td class="u">FIRSTCOMMDT</td><td class="d">2007-04-12</td></tr>
<tr><td class="u">CURRCOMMDT</td><td class="d">2007-04-12</td></tr>
<tr><td class="u">COMMFAILCOUNT</td><td class="d">1</td></tr>
<tr><td>Data type</td><td>Read_Failed</td></tr>
<tr><td>dataType</td><td>Read_Failed</td></tr>
<tr><td>graphicType</td><td>Read_Failed</td></tr>
<tr><td>&nbsp;</td><td>&nbsp;</td></tr>
</table>
<div class="abs" style="left:336px;top:0;width:15px;height:344px;background:#ccc;border-left:1px solid #666">
<svg class="abs" style="left:0;top:0" width="15" height="344" shape-rendering="crispEdges"><defs><pattern id="bump2" width="4" height="4" patternUnits="userSpaceOnUse"><rect x="0" y="0" width="1" height="1" fill="#ccccff"/><rect x="1" y="1" width="1" height="1" fill="#666699"/><rect x="2" y="2" width="1" height="1" fill="#ccccff"/><rect x="3" y="3" width="1" height="1" fill="#666699"/></pattern></defs>
<rect x="0" y="0" width="14" height="15" fill="#ccc"/><rect x="0" y="0" width="14" height="1" fill="#fff"/><rect x="0" y="0" width="1" height="15" fill="#fff"/><rect x="0" y="14" width="14" height="1" fill="#666"/>
<polygon points="3,10 11,10 7,6" fill="#000" shape-rendering="auto"/>
<rect x="0" y="15" width="14" height="258" fill="#9999cc"/><rect x="0" y="15" width="14" height="1" fill="#ccccff"/><rect x="0" y="15" width="1" height="257" fill="#ccccff"/><rect x="0" y="272" width="14" height="1" fill="#666699"/><rect x="13" y="15" width="1" height="258" fill="#666699"/>
<rect x="3" y="19" width="8" height="250" fill="url(#bump2)"/>
<rect x="0" y="273" width="1" height="55" fill="#999"/><rect x="0" y="273" width="14" height="1" fill="#999"/>
<rect x="0" y="328" width="14" height="1" fill="#666"/><rect x="0" y="329" width="14" height="1" fill="#fff"/><rect x="0" y="329" width="1" height="15" fill="#fff"/>
<polygon points="3,334 11,334 7,338.5" fill="#000" shape-rendering="auto"/>
</svg></div>
</div>
<div class="b " style="left:659px;top:573px;width:352px;height:24px"><div class="tx" style="left:3px;top:5px;z-index:2">Pole</div><svg class="abs" style="left:336px;top:8px;z-index:2" width="12" height="7"><polygon points="0,0 10,0 5,5" fill="#000"/></svg></div>
<div class="tx" style="left:658.5px;top:602px">Angle</div><div class="tx" style="left:658.5px;top:622px">Distance</div>
<div class="abs" style="left:834px;top:599px;width:178px;height:18px;background:#fff;border:1px solid #666;border-right-color:#999;border-bottom-color:#999"></div>
<div class="abs" style="left:834px;top:619px;width:178px;height:18px;background:#fff;border:1px solid #666;border-right-color:#999;border-bottom-color:#999"></div>
<div class="b " style="left:659px;top:639px;width:174px;height:24px"><div class="bt" style="top:5px">Shoot</div></div>
<div class="b " style="left:835px;top:639px;width:176px;height:24px"><div class="bt" style="top:5px">GPS</div></div>
<div class="b " style="left:659px;top:665px;width:174px;height:24px"><div class="bt" style="top:5px">Draw</div></div>
<div class="b " style="left:835px;top:665px;width:176px;height:24px"><div class="bt" style="top:5px">Delete</div></div>
</body></html>
